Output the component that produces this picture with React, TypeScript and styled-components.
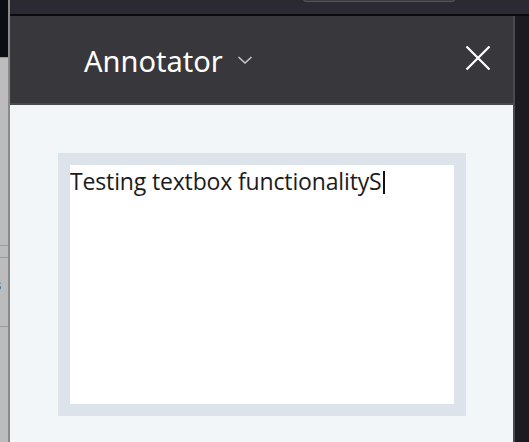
import React from 'react';
import styled, { createGlobalStyle } from 'styled-components';

const GlobalStyle = createGlobalStyle`
  html, body {
    margin: 0;
    padding: 0;
    background: #1c1b22;
  }
  #root {
    height: 442px;
  }
`;

const Page = styled.div`
  display: flex;
  width: 529px;
  height: 442px;
  overflow: hidden;
  font-family: 'Noto Sans', 'Open Sans', sans-serif;
`;

const SideStrip = styled.div`
  width: 8px;
  flex-shrink: 0;
  display: flex;
  flex-direction: column;
  border-right: 2px solid #8a8a8a;
  background: #bcbcbc;
  overflow: hidden;
`;

const SideDark = styled.div`
  height: 57px;
  background: #0b0e13;
  border-bottom: 1px solid #9a9a9a;
`;

const SideRule = styled.div<{ $top: number }>`
  margin-top: ${({ $top }) => $top}px;
  height: 1px;
  background: #9c9c9c;
`;

const SideGlyph = styled.div`
  margin: 20px 0 0 -6px;
  font-family: 'Open Sans', sans-serif;
  font-weight: 700;
  font-size: 14px;
  line-height: 14px;
  color: #111;
`;

const Main = styled.div`
  flex: 1;
  display: flex;
  flex-direction: column;
  min-width: 0;
`;

const TopBar = styled.div`
  height: 14px;
  flex-shrink: 0;
  background: #2b2a33;
  border-bottom: 2px solid #0c0c0d;
  padding-left: 293px;
`;

const Tab = styled.div`
  width: 150px;
  height: 2px;
  border: 1px solid #55545f;
  border-top: none;
  border-radius: 0 0 6px 6px;
  background: #3a3944;
  margin-top: -1px;
`;

const Body = styled.div`
  flex: 1;
  display: flex;
`;

const Panel = styled.div`
  width: 503px;
  display: flex;
  flex-direction: column;
  border-right: 2px solid #4a4951;
`;

const Header = styled.div`
  height: 87px;
  flex-shrink: 0;
  background: #38373c;
  border-bottom: 2px solid #4a4950;
  display: flex;
  align-items: center;
  padding: 0 22px 0 74px;
`;

const Title = styled.div`
  display: flex;
  align-items: center;
  gap: 14px;
  color: #ffffff;
  font-size: 29px;
  margin-top: 1px;
  flex: 1;
`;

const CloseButton = styled.div`
  width: 26px;
  height: 26px;
  display: flex;
  align-items: center;
  justify-content: center;
  margin-top: -3px;
`;

const Content = styled.div`
  flex: 1;
  background: #f2f6f8;
  padding: 48px 47px 0 48px;
`;

const Frame = styled.div`
  width: 384px;
  height: 239px;
  border: 12px solid #dce3ea;
  background: #ffffff;
`;

const Text = styled.div`
  font-family: 'Open Sans', 'Noto Sans', sans-serif;
  font-size: 23px;
  line-height: 28px;
  color: #1b1b1b;
  padding-top: 2px;
  letter-spacing: -0.15px;
  display: flex;
  align-items: center;
`;

const Caret = styled.span`
  display: inline-block;
  width: 2px;
  height: 23px;
  background: #111;
  margin-left: 1px;
  margin-top: 3px;
`;

const Gutter = styled.div`
  flex: 1;
  background: #1c1b22;
`;

export default function App() {
  return (
    <>
      <GlobalStyle />
      <Page>
        <SideStrip>
          <SideDark />
          <SideRule $top={187} />
          <SideRule $top={11} />
          <SideGlyph>s</SideGlyph>
          <SideRule $top={34} />
        </SideStrip>
        <Main>
          <TopBar>
            <Tab />
          </TopBar>
          <Body>
            <Panel>
              <Header>
                <Title>
                  Annotator
                  <svg width="16" height="10" viewBox="0 0 16 10" fill="none">
                    <path d="M1.5 2 L8 8 L14.5 2" stroke="#c9c9cc" strokeWidth="1.6" />
                  </svg>
                </Title>
                <CloseButton>
                  <svg width="26" height="26" viewBox="0 0 26 26" fill="none">
                    <path d="M1.5 1.5 L24.5 24.5 M24.5 1.5 L1.5 24.5" stroke="#ffffff" strokeWidth="2.2" />
                  </svg>
                </CloseButton>
              </Header>
              <Content>
                <Frame>
                  <Text>
                    Testing textbox functionalityS
                    <Caret />
                  </Text>
                </Frame>
              </Content>
            </Panel>
            <Gutter />
          </Body>
        </Main>
      </Page>
    </>
  );
}
